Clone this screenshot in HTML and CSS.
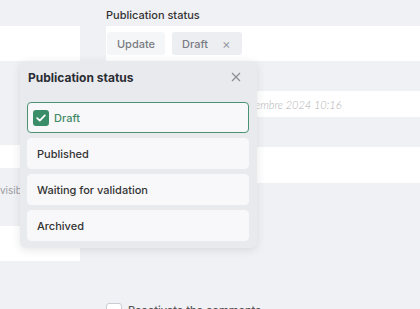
FILE: index.html
```html
<!DOCTYPE html>
<html lang="fr">
<head>
    <meta charset="UTF-8">
    <meta name="viewport" content="width=device-width, initial-scale=1.0">
    <title>Publication status</title>
    <link rel="stylesheet" href="styles.css">
</head>
<body>

<div class="page">
    <div class="col-left">
        <div class="box box-top"></div>
        <div class="box box-mid"></div>
        <div class="hint">visible</div>
        <div class="box box-low"></div>
    </div>

    <div class="col-right">
        <div class="field-label">Publication status</div>
        <div class="field field-status">
            <button class="btn-update" type="button">Update</button>
            <span class="chip">Draft <span class="chip-x">&times;</span></span>
        </div>
        <div class="field field-date">
            <span class="date">Dernière modification le 14 novembre 2024 10:16</span>
        </div>
        <div class="field field-empty"></div>
        <label class="reactivate">
            <span class="box-check"></span>
            <span>Reactivate the comments</span>
        </label>
    </div>
</div>

<div class="popup">
    <div class="popup-head">
        <span class="popup-title">Publication status</span>
        <svg class="popup-close" width="10" height="10" viewBox="0 0 10 10">
            <path d="M1 1 L9 9 M9 1 L1 9" stroke="#8a8d94" stroke-width="1.2" fill="none"/>
        </svg>
    </div>
    <div class="options">
        <div class="option selected">
            <span class="tick">
                <svg width="10" height="8" viewBox="0 0 10 8">
                    <path d="M1.2 4.2 L3.8 6.6 L8.8 1.4" stroke="#fff" stroke-width="1.8" fill="none" stroke-linecap="round" stroke-linejoin="round"/>
                </svg>
            </span>
            Draft
        </div>
        <div class="option">Published</div>
        <div class="option">Waiting for validation</div>
        <div class="option">Archived</div>
    </div>
</div>

</body>
</html>
```

FILE: styles.css
```css
body {
    margin: 0;
    background: #f0f1f5;
    font-family: 'Inter', 'Open Sans', sans-serif;
    color: #333;
    overflow: hidden;
}
.page {
    display: grid;
    grid-template-columns: 80px 1fr;
    column-gap: 26px;
    height: 309px;
}
.col-left {
    padding-top: 26px;
}
.box {
    background: #fff;
}
.box-top {
    height: 35px;
}
.box-mid {
    height: 23px;
    margin-top: 84px;
}
.hint {
    width: 20px;
    margin-top: 15px;
    height: 14px;
    overflow: hidden;
    font-size: 10px;
    line-height: 14px;
    color: #9a9ca2;
    white-space: nowrap;
}
.box-low {
    height: 35px;
    margin-top: 29px;
}
.col-right {
    padding-top: 6px;
}
.field-label {
    height: 20px;
    font-size: 11px;
    font-weight: 500;
    color: #333;
    line-height: 18px;
}
.field {
    background: #fff;
}
.field-status {
    height: 35px;
    box-sizing: border-box;
    padding: 6px 0 6px 1px;
    display: flex;
    gap: 7px;
}
.btn-update {
    width: 58px;
    height: 23px;
    border: none;
    border-radius: 3px;
    background: #f5f6f8;
    color: #7a7c82;
    font-family: inherit;
    font-size: 11px;
    font-weight: 500;
    padding: 0;
}
.chip {
    width: 70px;
    height: 23px;
    box-sizing: border-box;
    display: flex;
    align-items: center;
    padding-left: 10px;
    gap: 14px;
    border-radius: 3px;
    background: #eceef2;
    color: #7a7c82;
    font-size: 11px;
    font-weight: 500;
}
.chip-x {
    font-weight: 400;
    font-size: 13px;
    color: #9a9ca2;
}
.field-date {
    height: 26px;
    margin-top: 30px;
    display: flex;
    align-items: center;
    padding-left: 8px;
    white-space: nowrap;
    overflow: hidden;
}
.date {
    font-family: 'Lato', sans-serif;
    font-style: italic;
    font-weight: 300;
    font-size: 11px;
    color: #b0b1b5;
}
.field-empty {
    height: 36px;
    margin-top: 30px;
}
.reactivate {
    display: flex;
    align-items: flex-start;
    gap: 6px;
    margin-top: 120px;
    font-size: 11px;
    font-weight: 500;
    color: #555;
}
.box-check {
    width: 14px;
    height: 14px;
    border: 1px solid #c9ccd2;
    border-radius: 3px;
    background: #fff;
}
.popup {
    position: absolute;
    left: 20px;
    top: 61px;
    width: 237px;
    box-sizing: border-box;
    padding: 0 8px 7px 7px;
    background: #e9eaee;
    border-radius: 6px;
    box-shadow: 0 2px 10px rgba(0, 0, 0, 0.1);
}
.popup-head {
    height: 32px;
    display: flex;
    align-items: center;
    justify-content: space-between;
    padding: 0 8px 0 1px;
    margin-bottom: 9px;
}
.popup-title {
    font-size: 12px;
    font-weight: 700;
    color: #2b2d33;
}
.options {
    display: flex;
    flex-direction: column;
    gap: 5px;
}
.option {
    height: 31px;
    box-sizing: border-box;
    display: flex;
    align-items: center;
    padding-left: 9px;
    background: #f8f8fa;
    border: 1px solid #f8f8fa;
    border-radius: 4px;
    font-size: 11px;
    font-weight: 500;
    color: #333;
}
.option.selected {
    padding-left: 5px;
    gap: 5px;
    border-color: #4a9274;
    color: #3f8a68;
}
.tick {
    width: 16px;
    height: 16px;
    border-radius: 3px;
    background: #3a8d69;
    display: flex;
    align-items: center;
    justify-content: center;
}
```
